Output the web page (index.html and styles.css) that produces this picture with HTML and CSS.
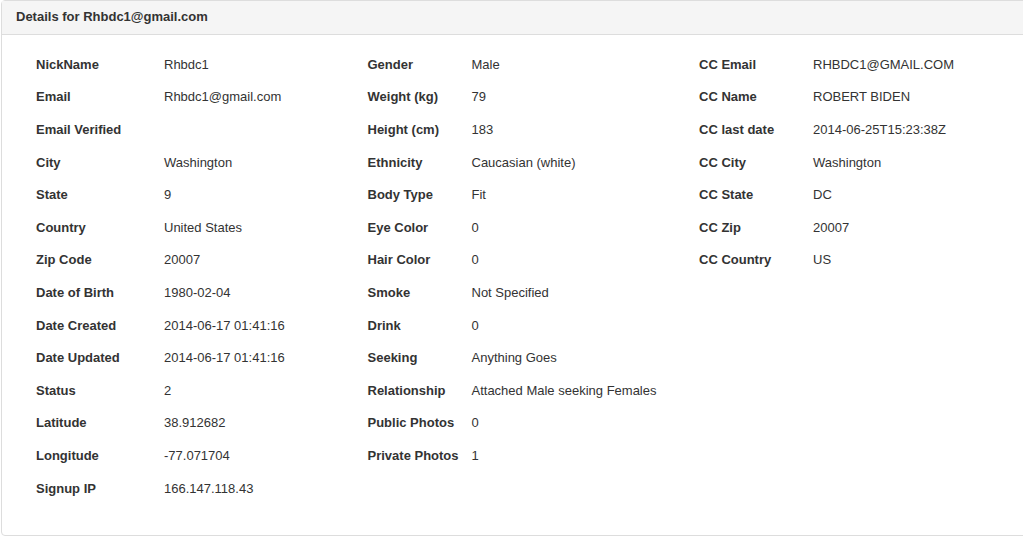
FILE: index.html
```html
<!DOCTYPE html>
<html>
<head>
<meta charset="utf-8">
<link rel="stylesheet" href="styles.css">
</head>
<body>
<div class="panel">
  <div class="panel-heading">Details for Rhbdc1@gmail.com</div>
  <div class="panel-body">
    <dl class="col col1">
      <dt>NickName</dt><dd>Rhbdc1</dd>
      <dt>Email</dt><dd>Rhbdc1@gmail.com</dd>
      <dt>Email Verified</dt><dd></dd>
      <dt>City</dt><dd>Washington</dd>
      <dt>State</dt><dd>9</dd>
      <dt>Country</dt><dd>United States</dd>
      <dt>Zip Code</dt><dd>20007</dd>
      <dt>Date of Birth</dt><dd>1980-02-04</dd>
      <dt>Date Created</dt><dd>2014-06-17 01:41:16</dd>
      <dt>Date Updated</dt><dd>2014-06-17 01:41:16</dd>
      <dt>Status</dt><dd>2</dd>
      <dt>Latitude</dt><dd>38.912682</dd>
      <dt>Longitude</dt><dd>-77.071704</dd>
      <dt>Signup IP</dt><dd>166.147.118.43</dd>
    </dl>
    <dl class="col col2">
      <dt>Gender</dt><dd>Male</dd>
      <dt>Weight (kg)</dt><dd>79</dd>
      <dt>Height (cm)</dt><dd>183</dd>
      <dt>Ethnicity</dt><dd>Caucasian (white)</dd>
      <dt>Body Type</dt><dd>Fit</dd>
      <dt>Eye Color</dt><dd>0</dd>
      <dt>Hair Color</dt><dd>0</dd>
      <dt>Smoke</dt><dd>Not Specified</dd>
      <dt>Drink</dt><dd>0</dd>
      <dt>Seeking</dt><dd>Anything Goes</dd>
      <dt>Relationship</dt><dd>Attached Male seeking Females</dd>
      <dt>Public Photos</dt><dd>0</dd>
      <dt>Private Photos</dt><dd>1</dd>
    </dl>
    <dl class="col col3">
      <dt>CC Email</dt><dd>RHBDC1@GMAIL.COM</dd>
      <dt>CC Name</dt><dd>ROBERT BIDEN</dd>
      <dt>CC last date</dt><dd>2014-06-25T15:23:38Z</dd>
      <dt>CC City</dt><dd>Washington</dd>
      <dt>CC State</dt><dd>DC</dd>
      <dt>CC Zip</dt><dd>20007</dd>
      <dt>CC Country</dt><dd>US</dd>
    </dl>
  </div>
</div>
</body>
</html>
```

FILE: styles.css
```css
html, body {
  margin: 0;
  padding: 0;
  background: #fff;
}
body {
  font-family: "Liberation Sans", Arial, sans-serif;
  font-size: 13px;
  color: #333;
  overflow: hidden;
}
.panel {
  margin-left: 1px;
  width: 1040px;
  height: 536px;
  border: 1px solid #ddd;
  border-radius: 4px;
  box-sizing: border-box;
  display: flex;
  flex-direction: column;
}
.panel-heading {
  height: 34px;
  box-sizing: border-box;
  padding: 0 14px 2px;
  background: #f5f5f5;
  border-bottom: 1px solid #ddd;
  font-weight: bold;
  display: flex;
  align-items: center;
}
.panel-body {
  display: flex;
  padding: 13px 0 0 34px;
}
.col {
  margin: 0;
  width: 331.5px;
  display: grid;
  grid-auto-rows: 32.6px;
  align-items: center;
}
.col dt {
  font-weight: bold;
  grid-column: 1;
}
.col dd {
  margin: 0;
  grid-column: 2;
}
.col1 { grid-template-columns: 128px 1fr; }
.col2 { grid-template-columns: 104px 1fr; }
.col3 { grid-template-columns: 114px 1fr; }
```
